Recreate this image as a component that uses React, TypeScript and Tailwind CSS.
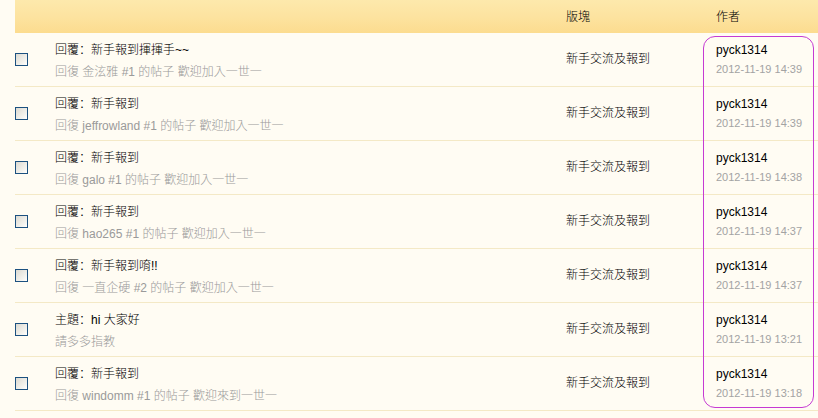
import React from "react";

type Row = { label: string; title: string; sub: string; time: string };

const rows: Row[] = [
  { label: "回覆", title: "新手報到揮揮手~~", sub: "回復 金泫雅 #1 的帖子 歡迎加入一世一", time: "2012-11-19 14:39" },
  { label: "回覆", title: "新手報到", sub: "回復 jeffrowland #1 的帖子 歡迎加入一世一", time: "2012-11-19 14:39" },
  { label: "回覆", title: "新手報到", sub: "回復 galo #1 的帖子 歡迎加入一世一", time: "2012-11-19 14:38" },
  { label: "回覆", title: "新手報到", sub: "回復 hao265 #1 的帖子 歡迎加入一世一", time: "2012-11-19 14:37" },
  { label: "回覆", title: "新手報到唷!!", sub: "回復 一直企硬 #2 的帖子 歡迎加入一世一", time: "2012-11-19 14:37" },
  { label: "主題", title: "hi 大家好", sub: "請多多指教", time: "2012-11-19 13:21" },
  { label: "回覆", title: "新手報到", sub: "回復 windomm #1 的帖子 歡迎來到一世一", time: "2012-11-19 13:18" },
];

const font = { fontFamily: '"Liberation Sans", "Noto Sans CJK TC", sans-serif' };
const scFont = { fontFamily: '"Noto Sans CJK SC", sans-serif' };

export default function App() {
  return (
    <div
      className="relative w-[818px] h-[418px] overflow-hidden bg-[#fffcf3] pl-[15px] text-[12px] font-light text-black"
      style={font}
    >
      <div className="flex h-[33px] items-center bg-[linear-gradient(to_bottom,#fde9ac,#fde3a0_50%,#fcdc8f)]">
        <div className="w-[551px]" />
        <div className="w-[150px]">版塊</div>
        <div className="flex-1">作者</div>
      </div>
      {rows.map((r, i) => (
        <div key={i} className="flex h-[54px] border-b border-[#f4e9c6]">
          <div className="flex w-[40px] items-center">
            <div className="h-[13px] w-[13px] border border-[#1c5180] bg-[linear-gradient(135deg,#dcdad2,#f4f3ee_70%,#ffffff)]" />
          </div>
          <div className="flex w-[511px] flex-col pt-[7px]">
            <div className="leading-[18px]">
              {r.label}
              <span style={scFont}>：</span>
              {r.title}
            </div>
            <div className="mt-[4px] leading-[18px] text-[#9a9a9a]">{r.sub}</div>
          </div>
          <div className="flex w-[150px] items-center pb-[2px]">新手交流及報到</div>
          <div className="flex flex-1 flex-col pt-[9px]">
            <div className="leading-[16px]">pyck1314</div>
            <div className="mt-[3px] text-[11px] leading-[16px] text-[#a3a3a3]">{r.time}</div>
          </div>
        </div>
      ))}
      <div className="pointer-events-none absolute left-[703px] top-[36px] h-[372px] w-[111px] rounded-[12px] border-[1.5px] border-[#c63ad3]" />
    </div>
  );
}
